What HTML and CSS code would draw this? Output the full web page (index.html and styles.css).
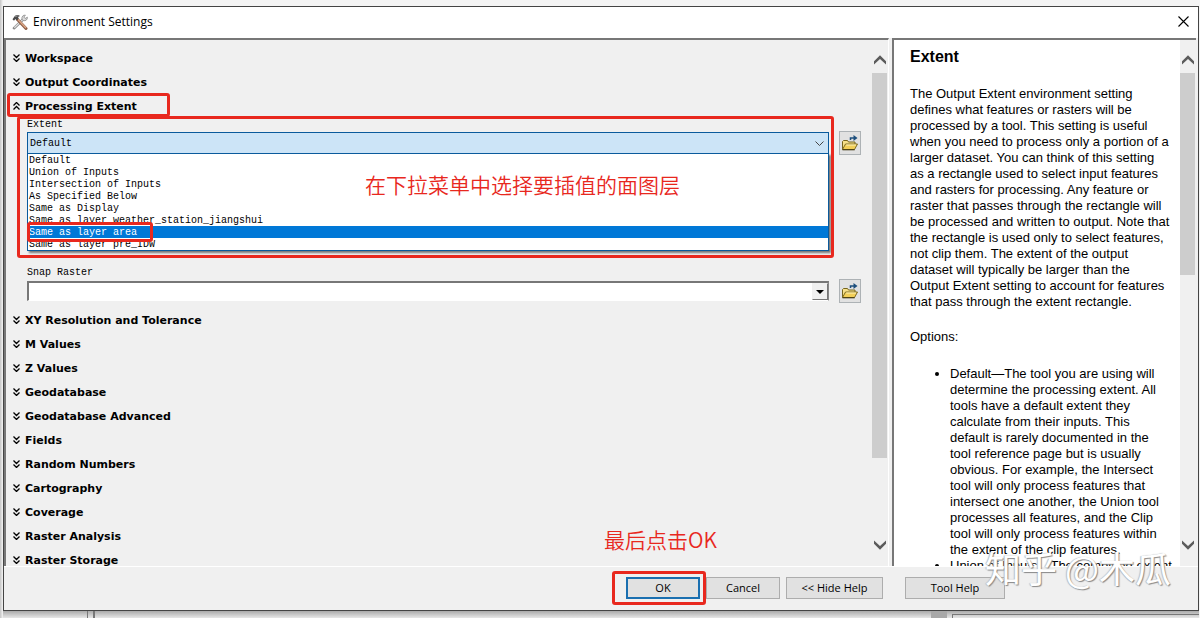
FILE: index.html
```html
<!DOCTYPE html>
<html lang="en">
  <head>
    <meta charset="UTF-8" />
    <meta name="viewport" content="width=device-width, initial-scale=1.0" />
    <title>Environment Settings</title>
    <link rel="stylesheet" href="styles.css">
  </head>

  <body>
    <!-- shared icons -->
    <svg class="sprite" aria-hidden="true">
      <symbol id="icon-expand" viewBox="0 0 7 8">
        <path d="M0.5 0.5l3 3 3-3M0.5 4.5l3 3 3-3" fill="none" stroke="#000" stroke-width="1.3" />
      </symbol>
      <symbol id="icon-collapse" viewBox="0 0 7 8">
        <path d="M0.5 3.5l3-3 3 3M0.5 7.5l3-3 3 3" fill="none" stroke="#000" stroke-width="1.3" />
      </symbol>
      <symbol id="icon-up" viewBox="0 0 12 10">
        <path d="M0 6.2L6 0.2l6 6v3.4L6 4 0 9.6z" fill="#5b5b5b" />
      </symbol>
      <symbol id="icon-down" viewBox="0 0 12 10">
        <path d="M0 3.8l6 6 6-6V0.4L6 6 0 0.4z" fill="#5b5b5b" />
      </symbol>
      <symbol id="icon-folder" viewBox="0 0 18 16">
        <path d="M1.5 14.5v-8l1-1h4l1 1.500h6.500v2" fill="#f6e08a" stroke="#75641d" />
        <path d="M1.5 14.5l3-5.500h12l-3 5.500z" fill="#f2cf58" stroke="#7d6b22" />
        <path d="M5.2 10h9.800" stroke="#fdf3b8" />
        <path d="M1.5 14.800h12.200" stroke="#3d340f" />
        <path d="M9.5 5V3h4" fill="none" stroke="#1d4e7c" stroke-width="1.5" />
        <path d="M12.5 0l4 3-4 3z" fill="#1d4e7c" />
      </symbol>
    </svg>

    <main class="dialog">
      <header class="titlebar">
        <svg class="title-icon" viewBox="0 0 16 16" aria-hidden="true">
          <path d="M2 14.2L11 5.5" stroke="#8a8a8a" stroke-width="2.6" stroke-linecap="round" />
          <path d="M2.3 13.7L11 5.5" stroke="#e2e2e2" stroke-width="1.2" />
          <path d="M10 5.5C9.4 2.5 11.2 0.8 13.4 1.2L11.8 3l1.300 1.500 2.300-1.300c0.200 2.600-2 4.100-4 3.300z" fill="#dcdcdc" stroke="#888" stroke-width="0.8" />
          <path d="M5.500 5.500l8.500 9" stroke="#8d5c44" stroke-width="3" stroke-linecap="round" />
          <path d="M6 5.500l8 8.500" stroke="#dda888" stroke-width="1.400" />
          <path d="M0.500 5.200L3 1.800C4.600 0.700 6.600 0.900 8 2L6 3l0.700 1.600-2 2L3.400 5 2 6.800z" fill="#4b4b4b" />
          <path d="M3.200 2.700l2.500-0.900" stroke="#aaa" stroke-width="0.8" />
        </svg>
        <h1 class="title">Environment Settings</h1>
        <button class="close-btn" type="button" aria-label="Close">
          <svg viewBox="0 0 11 11"><path d="M0.5 0.5l10 10M10.5 0.5l-10 10" stroke="#000" stroke-width="1.1" /></svg>
        </button>
      </header>

      <div class="panels">
        <form class="settings">
          <div class="sections">
            <button class="section" type="button"><svg><use href="#icon-expand" /></svg>Workspace</button>
            <button class="section" type="button"><svg><use href="#icon-expand" /></svg>Output Coordinates</button>
            <button class="section" type="button"><svg><use href="#icon-collapse" /></svg>Processing Extent<span class="mark mark-section"></span></button>

            <div class="section-body">
              <div class="field field-extent">
                <label for="extent">Extent</label>
                <div class="field-row">
                  <div class="combo">
                    <select class="combo-open" id="extent">
                      <option>Default</option>
                    </select>
                    <svg class="combo-chevron" viewBox="0 0 9 6" aria-hidden="true"><path d="M0.5 0.5l4 4 4-4" fill="none" stroke="#444" /></svg>
                    <ul class="combo-list" role="listbox" aria-label="Extent">
                      <li role="option">Default</li>
                      <li role="option">Union of Inputs</li>
                      <li role="option">Intersection of Inputs</li>
                      <li role="option">As Specified Below</li>
                      <li role="option">Same as Display</li>
                      <li role="option">Same as layer weather_station_jiangshui</li>
                      <li role="option" class="active" aria-selected="true">Same as layer area<span class="mark mark-option"></span></li>
                      <li role="option">Same as layer pre_IDW</li>
                    </ul>
                  </div>
                  <button class="browse" type="button" aria-label="Browse extent"><svg><use href="#icon-folder" /></svg></button>
                </div>
                <span class="mark mark-extent"></span>
                <p class="note note-extent" lang="zh">在下拉菜单中选择要插值的面图层</p>
              </div>

              <div class="field">
                <label for="snap">Snap Raster</label>
                <div class="field-row">
                  <div class="combo">
                    <select class="combo-classic" id="snap">
                      <option></option>
                    </select>
                    <span class="combo-arrow"></span>
                  </div>
                  <button class="browse" type="button" aria-label="Browse snap raster"><svg><use href="#icon-folder" /></svg></button>
                </div>
              </div>
            </div>

            <button class="section" type="button"><svg><use href="#icon-expand" /></svg>XY Resolution and Tolerance</button>
            <button class="section" type="button"><svg><use href="#icon-expand" /></svg>M Values</button>
            <button class="section" type="button"><svg><use href="#icon-expand" /></svg>Z Values</button>
            <button class="section" type="button"><svg><use href="#icon-expand" /></svg>Geodatabase</button>
            <button class="section" type="button"><svg><use href="#icon-expand" /></svg>Geodatabase Advanced</button>
            <button class="section" type="button"><svg><use href="#icon-expand" /></svg>Fields</button>
            <button class="section" type="button"><svg><use href="#icon-expand" /></svg>Random Numbers</button>
            <button class="section" type="button"><svg><use href="#icon-expand" /></svg>Cartography</button>
            <button class="section" type="button"><svg><use href="#icon-expand" /></svg>Coverage</button>
            <button class="section" type="button"><svg><use href="#icon-expand" /></svg>Raster Analysis</button>
            <button class="section" type="button"><svg><use href="#icon-expand" /></svg>Raster Storage</button>
          </div>
          <div class="scrollbar">
            <svg><use href="#icon-up" /></svg>
            <div class="track"><div class="thumb thumb-settings"></div></div>
            <svg><use href="#icon-down" /></svg>
          </div>
        </form>

        <aside class="help">
          <article class="help-text">
            <h2>Extent</h2>
            <p>The Output Extent environment setting<br>defines what features or rasters will be<br>processed by a tool. This setting is useful<br>when you need to process only a portion of a<br>larger dataset. You can think of this setting<br>as a rectangle used to select input features<br>and rasters for processing. Any feature or<br>raster that passes through the rectangle will<br>be processed and written to output. Note that<br>the rectangle is used only to select features,<br>not clip them. The extent of the output<br>dataset will typically be larger than the<br>Output Extent setting to account for features<br>that pass through the extent rectangle.</p>
            <p>Options:</p>
            <ul>
              <li>Default—The tool you are using will<br>determine the processing extent. All<br>tools have a default extent they<br>calculate from their inputs. This<br>default is rarely documented in the<br>tool reference page but is usually<br>obvious. For example, the Intersect<br>tool will only process features that<br>intersect one another, the Union tool<br>processes all features, and the Clip<br>tool will only process features within<br>the extent of the clip features.</li>
              <li>Union of Inputs—The combined extent</li>
            </ul>
          </article>
          <div class="scrollbar">
            <svg><use href="#icon-up" /></svg>
            <div class="track"><div class="thumb thumb-help"></div></div>
            <svg><use href="#icon-down" /></svg>
          </div>
        </aside>
      </div>

      <footer class="actions">
        <button class="btn btn-default" type="button">OK<span class="mark mark-ok"></span></button>
        <button class="btn" type="button">Cancel</button>
        <button class="btn btn-wide" type="button">&lt;&lt; Hide Help</button>
        <button class="btn btn-help" type="button">Tool Help</button>
        <p class="note note-ok" lang="zh">最后点击OK</p>
        <p class="watermark" lang="zh">知乎 @木瓜</p>
      </footer>
    </main>

    <!-- window behind the dialog -->
    <div class="behind">
      <div class="behind-left"></div>
      <div class="behind-main"></div>
      <div class="behind-scroll"></div>
      <div class="behind-right"></div>
    </div>
  </body>
</html>
```

FILE: styles.css
```css
* {
  box-sizing: border-box;
}

body {
  margin: 0;
  padding: 6px 1px 0 3px;
  height: 100vh;
  display: flex;
  flex-direction: column;
  overflow: hidden;
  background: linear-gradient(90deg, #c4c4c4, #f4f4f4 3px);
  font-family: "Open Sans", "Noto Sans", sans-serif;
  font-size: 12px;
  color: #000;
}

h1,
h2,
p,
ul {
  margin: 0;
  padding: 0;
}

button {
  font: inherit;
  color: inherit;
}

.sprite {
  position: absolute;
  width: 0;
  height: 0;
}

.dialog {
  flex: 1;
  min-height: 0;
  display: flex;
  flex-direction: column;
  background: #f0f0f0;
  border: 1px solid #444;
}

.titlebar {
  display: flex;
  align-items: center;
  height: 31px;
  padding: 0 9px 2px 8px;
  background: #fff;
}

.title-icon {
  width: 16px;
  height: 16px;
  margin-right: 5px;
}

.title {
  flex: 1;
  font-size: 12px;
  font-weight: 400;
}

.close-btn {
  display: flex;
  padding: 0;
  border: none;
  background: none;
}

.close-btn svg {
  width: 11px;
  height: 11px;
}

.panels {
  flex: 1;
  min-height: 0;
  display: flex;
  gap: 3px;
  padding-right: 2px;
  border-bottom: 1px solid #fff;
}

.settings {
  flex: 1;
  min-width: 0;
  display: flex;
  border: 2px solid #777;
  border-right: 1px solid #fff;
  border-bottom: none;
}

.sections {
  flex: 1;
  min-width: 0;
  padding-top: 6px;
  overflow: hidden;
}

.section {
  position: relative;
  display: flex;
  align-items: center;
  gap: 5px;
  width: 100%;
  height: 24px;
  padding: 0 7px;
  border: none;
  background: none;
  font: bold 11px "DejaVu Sans", sans-serif;
  text-align: left;
}

.section svg {
  width: 7px;
  height: 8px;
}

.section-body {
  height: 190px;
  padding: 0 11px 0 21px;
  font: 10px/14px "Liberation Mono", monospace;
}

.field {
  position: relative;
}

.field-extent {
  height: 148px;
}

.field label {
  display: block;
  height: 12px;
}

.field-row {
  display: flex;
  align-items: center;
  gap: 10px;
  height: 26px;
}

.combo {
  position: relative;
  flex: 1;
}

.combo select {
  appearance: none;
  display: block;
  width: 100%;
  padding: 1px 2px 0;
  border-radius: 0;
  outline: none;
  font: inherit;
  color: #000;
}

.combo .combo-open {
  height: 22px;
  border: 1px solid #0a5a9c;
  background: #cce4f7;
}

.combo .combo-classic {
  height: 20px;
  border: 2px solid #777;
  border-right: 1px solid #888;
  border-bottom: 1px solid #fff;
  background: #fff;
}

.combo-chevron {
  position: absolute;
  top: 9px;
  right: 5px;
  width: 9px;
  height: 6px;
}

.combo-arrow {
  position: absolute;
  top: 2px;
  right: 1px;
  bottom: 1px;
  width: 16px;
  display: flex;
  align-items: center;
  justify-content: center;
  border: 1px solid #f0f0f0;
  border-right-color: #777;
  border-bottom-color: #777;
  background: #f0f0f0;
  pointer-events: none;
}

.combo-arrow::before {
  content: "";
  border: 4px solid transparent;
  border-top-color: #000;
  border-bottom: none;
}

.combo-list {
  position: absolute;
  top: 21px;
  left: 0;
  right: 0;
  z-index: 1;
  border: 1px solid #0a5a9c;
  background: #fff;
  box-shadow: 2px 2px 2px #777;
  list-style: none;
}

.combo-list li {
  position: relative;
  height: 12px;
  padding-left: 1px;
  white-space: nowrap;
}

.combo-list .active {
  background: #0078d7;
  color: #fff;
}

.browse {
  display: flex;
  align-items: center;
  justify-content: center;
  width: 22px;
  height: 24px;
  padding: 0;
  border: 1px solid #adb2b5;
  background: #e1e1e1;
}

.browse svg {
  width: 18px;
  height: 16px;
}

.scrollbar {
  display: flex;
  flex-direction: column;
  align-items: center;
  width: 16px;
  padding: 15px 0 16px;
  background: #f0f0f0;
}

.scrollbar > svg {
  width: 12px;
  height: 10px;
}

.track {
  flex: 1;
  width: 100%;
  padding: 8px 1px 9px 0;
}

.thumb {
  background: #cdcdcd;
}

.thumb-settings {
  height: 84%;
}

.thumb-help {
  height: 44%;
}

.help {
  display: flex;
  width: 304px;
  border: 2px solid #777;
  border-right: none;
  border-bottom: none;
  background: #fff;
}

.help-text {
  flex: 1;
  padding: 7px 0 0 16px;
  overflow: hidden;
  font: 13px/16px "Liberation Sans", Arial, sans-serif;
  white-space: nowrap;
}

.help-text h2 {
  margin-bottom: 19px;
  font-size: 16px;
  line-height: 20px;
}

.help-text p {
  margin-bottom: 19px;
}

.help-text ul {
  padding: 2px 0 0 40px;
}

.actions {
  position: relative;
  display: flex;
  justify-content: flex-end;
  align-items: center;
  gap: 6px;
  height: 43px;
  padding: 0 193px 2px 0;
}

.btn {
  position: relative;
  width: 74px;
  height: 22px;
  padding: 0;
  border: 1px solid #adadad;
  background: #e1e1e1;
  font-size: 11px;
  line-height: 20px;
}

.btn-default {
  border: 2px solid #1a6fb0;
  line-height: 18px;
}

.btn-wide {
  width: 97px;
}

.btn-help {
  width: 100px;
  margin-left: 16px;
}

/* red tutorial marks */
.mark {
  position: absolute;
  border: 3px solid #e8281e;
  border-radius: 3px;
  pointer-events: none;
}

.mark-section {
  top: -1px;
  left: 1px;
  width: 163px;
  height: 24px;
}

.mark-extent {
  top: -2px;
  left: -10px;
  right: 27px;
  height: 142px;
  z-index: 2;
}

.mark-option {
  top: -4px;
  left: -1px;
  width: 126px;
  height: 20px;
  z-index: 1;
}

.mark-ok {
  inset: -8px;
  left: -16px;
}

.note {
  position: absolute;
  font: 350 21px/28px "Noto Sans CJK SC", sans-serif;
  color: #e8281e;
  white-space: nowrap;
}

.note-extent {
  top: 52px;
  left: 338px;
  z-index: 2;
}

.note-ok {
  top: -42px;
  right: 481px;
}

.watermark {
  position: absolute;
  top: -24px;
  right: 27px;
  font: 36px/48px "Noto Sans CJK SC", sans-serif;
  color: #fff;
  text-shadow: 1px 1px 1px #888, -1px 0 1px #bbb;
  white-space: nowrap;
}

.behind {
  display: flex;
  height: 7px;
  background: linear-gradient(#aaa, #e6e6e6);
}

.behind-left {
  width: 85px;
  border-right: 1px solid #777;
}

.behind-main {
  flex: 1;
  margin-left: 5px;
  border-left: 2px solid #777;
}

.behind-scroll {
  width: 16px;
  background: #a8a8a8;
}

.behind-right {
  width: 247px;
  margin: 3px 0 0 5px;
  border-top: 1px solid #777;
  border-left: 1px solid #777;
}
```
